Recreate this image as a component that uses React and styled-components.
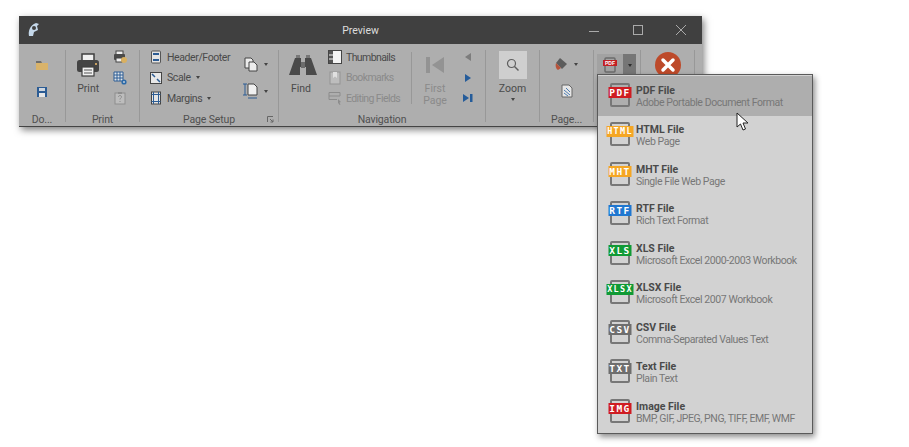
import React from 'react'
import styled, { createGlobalStyle } from 'styled-components'

const GlobalStyle = createGlobalStyle`
  html, body { margin: 0; padding: 0; background: #fff; }
  body { font-family: Roboto, "Liberation Sans", sans-serif; font-size: 10.5px; color: #4a4a4a; }
`

const Stage = styled.div`
  position: relative;
  width: 909px;
  height: 447px;
  padding: 16px 0 0 19px;
  box-sizing: border-box;
  overflow: hidden;
`

const Win = styled.div`
  width: 683px;
  background: #aeaeae;
  box-shadow: 2px 3px 7px rgba(0, 0, 0, 0.5);
`

const TitleBar = styled.div`
  height: 28px;
  background: #404040;
  display: grid;
  grid-template-columns: 1fr auto 1fr;
  align-items: center;
  color: #ddd;
`

const Logo = styled.div`
  padding-left: 7px;
  display: flex;
`

const WinButtons = styled.div`
  display: flex;
  justify-content: flex-end;
  gap: 33.5px;
  padding-right: 16px;
  align-items: center;
`

const Ribbon = styled.div`
  display: flex;
  height: 83px;
  box-sizing: border-box;
  padding-top: 6px;
  border-bottom: 1px solid #444;
`

const Group = styled.div`
  width: ${p => p.$w}px;
  display: flex;
  flex-direction: column;
  position: relative;
`

const Sep = styled.div`
  width: 1px;
  height: 72px;
  background: #989898;
  flex: none;
`

const Body = styled.div`
  height: 63px;
  display: flex;
  justify-content: ${p => p.$justify || 'flex-start'};
  padding-left: ${p => p.$pad || 0}px;
`

const GroupLabel = styled.div`
  height: 13px;
  line-height: 14px;
  text-align: center;
  color: #505050;
  letter-spacing: -0.15px;
`

const Launcher = styled.svg`
  position: absolute;
  right: 4px;
  bottom: 3px;
`

const BigBtn = styled.div`
  width: ${p => p.$w}px;
  display: flex;
  flex-direction: column;
  align-items: center;
  color: ${p => (p.$off ? '#8a8a8a' : '#4a4a4a')};
`

const BigIcon = styled.div`
  height: 30px;
  display: flex;
  align-items: center;
  justify-content: center;
  margin-bottom: 3px;
`

const BigText = styled.div`
  line-height: 12px;
  text-align: center;
`

const IconCol = styled.div`
  box-sizing: border-box;
  width: ${p => p.$w}px;
  display: flex;
  flex-direction: column;
  gap: ${p => p.$gap ?? 6.5}px;
  padding-top: ${p => p.$top || 0}px;
  padding-left: ${p => p.$left || 0}px;
  letter-spacing: ${p => p.$track ?? -0.4}px;
  align-items: ${p => p.$align || 'center'};
`

const SmallRow = styled.div`
  height: 14px;
  display: flex;
  align-items: center;
  gap: 3px;
  color: ${p => (p.$off ? '#8a8a8a' : '#4a4a4a')};
  white-space: nowrap;
`

const Slot = styled.span`
  width: 16px;
  height: 16px;
  flex: none;
  display: flex;
  align-items: center;
  justify-content: center;
`

const Caret = styled.span`
  width: 0;
  height: 0;
  border-left: 2.5px solid transparent;
  border-right: 2.5px solid transparent;
  border-top: 3px solid ${p => p.$color || '#444'};
  margin-left: ${p => p.$gap ?? 2}px;
  margin-top: ${p => p.$top ?? 0}px;
  flex: none;
`

const VRule = styled.div`
  width: 1px;
  height: 52px;
  margin-top: 2px;
  background: #989898;
  flex: none;
`

const ZoomFace = styled.div`
  width: 28px;
  height: 28px;
  background: #cfcfcf;
  display: flex;
  align-items: center;
  justify-content: center;
`

const Split = styled.div`
  display: flex;
  width: 39px;
  height: 22px;
  margin: 4px 0 0 3px;
`

const SplitMain = styled.div`
  flex: 1;
  background: #a2a2a2;
  display: flex;
  align-items: center;
  justify-content: center;
`

const SplitArrow = styled.div`
  width: 13px;
  background: #767676;
  display: flex;
  align-items: center;
  justify-content: center;
`

const Menu = styled.div`
  position: absolute;
  left: 597px;
  top: 74px;
  width: 216px;
  height: 360px;
  box-sizing: border-box;
  background: #d2d2d2;
  border: 1px solid #5a5a5a;
  box-shadow: 2px 3px 6px rgba(0, 0, 0, 0.45);
  padding-top: 1px;
`

const MenuRow = styled.div`
  height: 39.5px;
  display: flex;
  align-items: center;
  background: ${p => (p.$active ? '#aeaeae' : 'transparent')};
`

const FileIcon = styled.div`
  position: relative;
  width: 20px;
  height: 24px;
  margin: -2px 6px 0 12px;
  flex: none;
  box-sizing: border-box;
  border: 2px solid #777;
  border-radius: 2px;
`

const Badge = styled.span`
  position: absolute;
  top: 2px;
  left: 50%;
  transform: translateX(-50%);
  width: ${p => (p.$wide ? 27 : 23)}px;
  height: 11px;
  background: ${p => p.$color};
  color: #fff;
  font: bold ${p => (p.$wide ? 8.5 : 9.5)}px/11px "DejaVu Sans Mono", "Liberation Mono", monospace;
  letter-spacing: ${p => (p.$wide ? 1.3 : 1.5)}px;
  text-align: center;
  white-space: nowrap;
`

const MenuText = styled.div`
  display: flex;
  flex-direction: column;
  padding-top: 2px;
`

const MenuTitle = styled.div`
  font-weight: 700;
  line-height: 12px;
  color: #4a4a4a;
`

const MenuSub = styled.div`
  line-height: 12px;
  color: #777;
  letter-spacing: -0.42px;
  white-space: nowrap;
`

const Cursor = styled.svg`
  position: absolute;
  left: 736px;
  top: 112px;
`

const MiniTag = styled.text`
  font: bold 5px "Liberation Sans", Arial, sans-serif;
  fill: #fff;
`

const Svg = ({ w = 16, h = 16, children }) => (
  <svg width={w} height={h} viewBox={`0 0 ${w} ${h}`}>{children}</svg>
)

const FolderIcon = () => (
  <Svg w={14} h={12}>
    <path d="M1 2h5l1 2h6v7H1z" fill="#d9b36a" />
    <path d="M1 2h5l1 2H1z" fill="#6e6e6e" />
  </Svg>
)

const SaveIcon = () => (
  <Svg w={12} h={12}>
    <rect x="1" y="1" width="10" height="10" fill="#2c5c94" />
    <rect x="3" y="2" width="6" height="3" fill="#cfd6de" />
    <rect x="3" y="7" width="6" height="4" fill="#e6e6e6" />
  </Svg>
)

const BigPrinter = () => (
  <Svg w={22} h={24}>
    <rect x="5" y="1" width="12" height="7" fill="#f0f0f0" stroke="#3f3f3f" strokeWidth="1.5" />
    <rect x="0" y="7" width="22" height="12" rx="2.5" fill="#444" />
    <rect x="5" y="14" width="12" height="9" fill="#f0f0f0" stroke="#3f3f3f" strokeWidth="1.2" />
    <path d="M7 17h8M7 20h8" stroke="#555" />
    <rect x="18" y="10" width="2" height="2" fill="#c8a060" />
  </Svg>
)

const SmallPrinter = () => (
  <Svg w={14} h={14}>
    <rect x="3" y="1" width="7" height="4" fill="#eee" stroke="#444" />
    <rect x="1" y="4" width="11" height="6" rx="1" fill="#4a4a4a" />
    <rect x="3" y="8" width="6" height="4" fill="#eee" stroke="#444" />
    <circle cx="11" cy="10" r="3" fill="#d9b060" />
  </Svg>
)

const GridIcon = () => (
  <Svg w={14} h={14}>
    <path d="M1 1h9v9H1zM4 1v9M7 1v9M1 4h9M1 7h9" fill="#dfe5ea" stroke="#2c5c94" />
    <circle cx="11" cy="11" r="2.6" fill="#2c6aa8" />
    <circle cx="11" cy="11" r="0.9" fill="#cfd6de" />
  </Svg>
)

const ClipIcon = () => (
  <Svg w={12} h={14}>
    <rect x="1" y="2" width="10" height="11" fill="#bdbdbd" stroke="#8e8e8e" />
    <rect x="4" y="1" width="4" height="2" fill="#8e8e8e" />
    <path d="M4.500 6c0-2 3-2 3 0 0 1-1.500 1-1.500 2.500M6 10v1" fill="none" stroke="#8a8a8a" />
  </Svg>
)

const HeaderIcon = () => (
  <Svg w={12} h={14}>
    <rect x="1.500" y="1" width="9" height="12" rx="1" fill="#e4e4e4" stroke="#555" />
    <path d="M3 4h6M3 10h6" stroke="#2c5c94" strokeWidth="2" />
  </Svg>
)

const ScaleIcon = () => (
  <Svg w={14} h={14}>
    <rect x="1.500" y="1.500" width="11" height="11" fill="#e8e8e8" stroke="#444" />
    <path d="M3 3l3 3M8 8l3 3" stroke="#2c5c94" strokeWidth="1.500" />
  </Svg>
)

const MarginsIcon = () => (
  <Svg w={12} h={14}>
    <rect x="1.500" y="1" width="9" height="12" fill="#e4e4e4" stroke="#444" />
    <path d="M3.500 1v12M8.500 1v12M1.500 3.500h9M1.500 10.500h9" stroke="#2c5c94" />
  </Svg>
)

const PagesIcon = () => (
  <Svg w={14} h={15}>
    <path d="M1 1h6l2 2v8H1z" fill="#ececec" stroke="#444" />
    <path d="M5 5h5l3 3v6H5z" fill="#ececec" stroke="#444" />
  </Svg>
)

const OrientIcon = () => (
  <Svg w={16} h={16}>
    <path d="M5 1h6l3 3v8H5z" fill="#f0f0f0" stroke="#444" />
    <path d="M2 1v11M4 1H0M4 12H0M5 15h9" stroke="#2c5c94" />
  </Svg>
)

const Binoculars = () => (
  <Svg w={32} h={20}>
    <g transform="translate(4 0)">
      <path d="M6 3h6v5h4V3h6l6 17H17v-8h-6v8H0z" fill="#4a4a4a" />
      <path d="M12 7h4v6h-4z" fill="#6c6c6c" />
      <path d="M7 0h4v3H7zM17 0h4v3h-4z" fill="#787878" />
    </g>
  </Svg>
)

const ThumbIcon = () => (
  <Svg w={14} h={14}>
    <rect x="0.500" y="0.500" width="13" height="13" fill="#f4f4f4" stroke="#444" />
    <rect x="1" y="1" width="4" height="12" fill="#555" />
    <path d="M1 5h4M1 9h4" stroke="#f4f4f4" />
  </Svg>
)

const BookIcon = () => (
  <Svg w={12} h={14}>
    <rect x="1" y="1" width="10" height="12" fill="#bdbdbd" stroke="#939393" />
    <path d="M4 1h4v6L6 5.500 4 7z" fill="#e0e0e0" />
  </Svg>
)

const FieldsIcon = () => (
  <Svg w={14} h={14}>
    <path d="M1 1.500h11M1 5h11M1 8.500h8M1 1.500v7M12 1.500V5" fill="none" stroke="#8c8c8c" />
    <path d="M10 8l3 3-1.500.5 1 2-1 .5-1-2L10 13z" fill="#8c8c8c" />
  </Svg>
)

const FirstBig = () => (
  <Svg w={18} h={18}>
    <rect x="0" y="1" width="4" height="16" fill="#939393" />
    <path d="M18 1v16L6 9z" fill="#939393" />
  </Svg>
)

const TriLeft = () => (
  <Svg w={8} h={10}><path d="M7 1v8L1 5z" fill="#7d7d7d" /></Svg>
)

const TriRight = () => (
  <Svg w={8} h={10}><path d="M1 1v8l6-4z" fill="#255c9a" /></Svg>
)

const LastIcon = () => (
  <Svg w={10} h={10}><path d="M0 1v8l6-4z M7 1h2.500v8H7z" fill="#255c9a" /></Svg>
)

const Magnifier = () => (
  <Svg w={14} h={14}>
    <circle cx="5.500" cy="5.500" r="4" fill="none" stroke="#5e5e5e" strokeWidth="1.200" />
    <path d="M8.500 8.500l4 4" stroke="#5e5e5e" strokeWidth="1.500" />
  </Svg>
)

const PaintIcon = () => (
  <Svg w={14} h={14}>
    <path d="M5 1l7 6-5 5-6-6z" fill="#5c5c5c" />
    <path d="M1 6c-1 3 0 6 2 7l3-2z" fill="#b8533a" />
  </Svg>
)

const PageDocIcon = () => (
  <Svg w={12} h={14}>
    <path d="M1 1h7l3 3v9H1z" fill="#e6e6e6" stroke="#666" />
    <path d="M3 6l6 5M3 9l4 3M5 4l4 4" stroke="#4d7cb0" />
  </Svg>
)

const MiniPdf = () => (
  <Svg w={14} h={16}>
    <rect x="2" y="1" width="10" height="14" rx="1" fill="none" stroke="#6c6c6c" strokeWidth="1.500" />
    <rect x="0" y="3" width="14" height="6" fill="#c21f24" />
    <MiniTag x="7" y="8" textAnchor="middle">PDF</MiniTag>
  </Svg>
)

const CloseBadge = () => (
  <Svg w={26} h={26}>
    <circle cx="13" cy="13" r="13" fill="#bd4a2a" />
    <path d="M8 8l10 10M18 8L8 18" stroke="#fff" strokeWidth="3.500" strokeLinecap="round" />
  </Svg>
)

const formats = [
  { tag: 'PDF', color: '#cf1c22', title: 'PDF File', sub: 'Adobe Portable Document Format', active: true },
  { tag: 'HTML', color: '#f5a623', title: 'HTML File', sub: 'Web Page', wide: true },
  { tag: 'MHT', color: '#f5a623', title: 'MHT File', sub: 'Single File Web Page' },
  { tag: 'RTF', color: '#1f77d0', title: 'RTF File', sub: 'Rich Text Format' },
  { tag: 'XLS', color: '#109a35', title: 'XLS File', sub: 'Microsoft Excel 2000-2003 Workbook' },
  { tag: 'XLSX', color: '#109a35', title: 'XLSX File', sub: 'Microsoft Excel 2007 Workbook', wide: true },
  { tag: 'CSV', color: '#6e6e6e', title: 'CSV File', sub: 'Comma-Separated Values Text' },
  { tag: 'TXT', color: '#6e6e6e', title: 'Text File', sub: 'Plain Text' },
  { tag: 'IMG', color: '#cf1c22', title: 'Image File', sub: 'BMP, GIF, JPEG, PNG, TIFF, EMF, WMF' },
]

export default function App() {
  return (
    <Stage>
      <GlobalStyle />
      <Win>
        <TitleBar>
          <Logo>
            <Svg w={14} h={16}>
              <path d="M3 14C2 9 4 3 10 1l3 1-2 2 1 4-4 2-1 4z" fill="#c5d8ea" />
              <circle cx="8" cy="6" r="2" fill="#404040" />
            </Svg>
          </Logo>
          <span>Preview</span>
          <WinButtons>
            <Svg w={10} h={10}><path d="M0 6.500h10" stroke="#aaa" /></Svg>
            <Svg w={10} h={10}><rect x="0.500" y="0.500" width="9" height="9" fill="none" stroke="#aaa" /></Svg>
            <Svg w={10} h={10}><path d="M0 0l10 10M10 0L0 10" stroke="#aaa" /></Svg>
          </WinButtons>
        </TitleBar>
        <Ribbon>
          <Group $w={46}>
            <Body>
              <IconCol $w={46} $top={9} $gap={15}>
                <FolderIcon />
                <SaveIcon />
              </IconCol>
            </Body>
            <GroupLabel>Do...</GroupLabel>
          </Group>
          <Sep />
          <Group $w={73}>
            <Body $pad={9}>
              <BigBtn $w={28}>
                <BigIcon><BigPrinter /></BigIcon>
                <BigText>Print</BigText>
              </BigBtn>
              <IconCol $w={40}>
                <SmallRow><SmallPrinter /></SmallRow>
                <SmallRow><GridIcon /></SmallRow>
                <SmallRow><ClipIcon /></SmallRow>
              </IconCol>
            </Body>
            <GroupLabel>Print</GroupLabel>
          </Group>
          <Sep />
          <Group $w={138}>
            <Body $pad={8}>
              <IconCol $w={95} $align="flex-start">
                <SmallRow><Slot><HeaderIcon /></Slot>Header/Footer</SmallRow>
                <SmallRow><Slot><ScaleIcon /></Slot>Scale<Caret /></SmallRow>
                <SmallRow><Slot><MarginsIcon /></Slot>Margins<Caret /></SmallRow>
              </IconCol>
              <IconCol $w={32} $top={7} $gap={13} $align="flex-start">
                <SmallRow><Slot><PagesIcon /></Slot><Caret /></SmallRow>
                <SmallRow><Slot><OrientIcon /></Slot><Caret /></SmallRow>
              </IconCol>
            </Body>
            <GroupLabel>Page Setup</GroupLabel>
            <Launcher width="7" height="7" viewBox="0 0 7 7">
              <path d="M0.500 6V0.500H6M3 3l3 3M6 3.500V6H3.500" fill="none" stroke="#666" />
            </Launcher>
          </Group>
          <Sep />
          <Group $w={206}>
            <Body>
              <BigBtn $w={44}>
                <BigIcon><Binoculars /></BigIcon>
                <BigText>Find</BigText>
              </BigBtn>
              <IconCol $w={88} $left={4} $track={-0.6} $align="flex-start">
                <SmallRow><Slot><ThumbIcon /></Slot>Thumbnails</SmallRow>
                <SmallRow $off><Slot><BookIcon /></Slot>Bookmarks</SmallRow>
                <SmallRow $off><Slot><FieldsIcon /></Slot>Editing Fields</SmallRow>
              </IconCol>
              <VRule />
              <BigBtn $w={46} $off>
                <BigIcon><FirstBig /></BigIcon>
                <BigText>First<br />Page</BigText>
              </BigBtn>
              <IconCol $w={20}>
                <SmallRow><TriLeft /></SmallRow>
                <SmallRow><TriRight /></SmallRow>
                <SmallRow><LastIcon /></SmallRow>
              </IconCol>
            </Body>
            <GroupLabel>Navigation</GroupLabel>
          </Group>
          <Sep />
          <Group $w={53}>
            <Body>
              <BigBtn $w={53}>
                <BigIcon><ZoomFace><Magnifier /></ZoomFace></BigIcon>
                <BigText>Zoom</BigText>
                <Caret $gap={0} $top={3} />
              </BigBtn>
            </Body>
            <GroupLabel />
          </Group>
          <Sep />
          <Group $w={53}>
            <Body>
              <IconCol $w={53} $top={7} $gap={13}>
                <SmallRow><PaintIcon /><Caret /></SmallRow>
                <SmallRow><PageDocIcon /></SmallRow>
              </IconCol>
            </Body>
            <GroupLabel>Page...</GroupLabel>
          </Group>
          <Sep />
          <Group $w={46}>
            <Split>
              <SplitMain><MiniPdf /></SplitMain>
              <SplitArrow><Caret $gap={0} $color="#2e2e2e" /></SplitArrow>
            </Split>
          </Group>
          <Sep />
          <Group $w={53}>
            <Body $justify="center">
              <BigIcon><CloseBadge /></BigIcon>
            </Body>
          </Group>
          <Sep />
        </Ribbon>
      </Win>
      <Menu>
        {formats.map(f => (
          <MenuRow key={f.tag} $active={f.active}>
            <FileIcon>
              <Badge $color={f.color} $wide={f.wide}>{f.tag}</Badge>
            </FileIcon>
            <MenuText>
              <MenuTitle>{f.title}</MenuTitle>
              <MenuSub>{f.sub}</MenuSub>
            </MenuText>
          </MenuRow>
        ))}
      </Menu>
      <Cursor width="14" height="20" viewBox="0 0 14 20">
        <path d="M1 1v14l3.500-3 2.500 6 2.500-1-2.500-6H12z" fill="#fff" stroke="#222" />
      </Cursor>
    </Stage>
  )
}
